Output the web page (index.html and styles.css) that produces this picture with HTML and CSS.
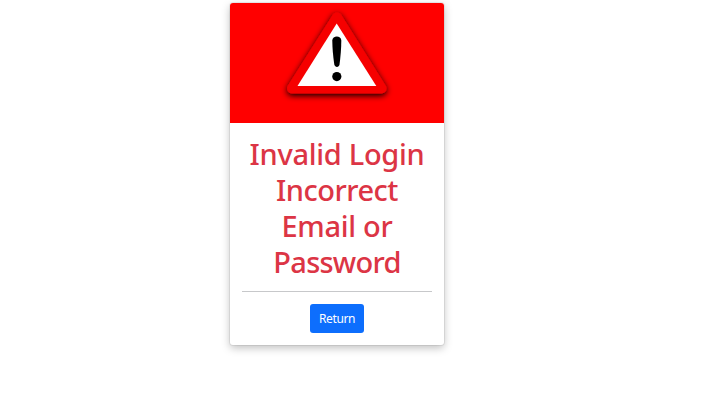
FILE: index.html
```html
<!DOCTYPE html>
<html lang="en">
<head>
<meta charset="utf-8">
<title>Invalid Login</title>
<link rel="stylesheet" href="styles.css">
</head>
<body>
<main class="card">
  <svg class="banner" viewBox="0 0 214 120" aria-hidden="true">
    <defs>
      <filter id="shadow" x="-20%" y="-20%" width="140%" height="150%">
        <feDropShadow dx="0" dy="2" stdDeviation="3.2" flood-color="#000" flood-opacity="1"/>
      </filter>
    </defs>
    <path d="M107 14.500 L62 85.500 H151.500 Z" fill="#f60206" stroke="#f60206" stroke-width="10" stroke-linejoin="round" filter="url(#shadow)"/>
    <path d="M106.700 20.500 L67.500 83 H146.300 Z" fill="#fff"/>
    <path d="M102.300 37.500 C102.300 32 111.300 32 111.300 37.500 C111.300 45 110.500 54 109.500 61.500 C109 64.800 105 64.800 104.300 61.500 C103.200 54 102.300 45 102.300 37.500 Z" fill="#000"/>
    <circle cx="106.800" cy="73.600" r="4.600" fill="#000"/>
  </svg>
  <div class="card-body">
    <h1 class="title"><span class="line-login">Invalid Login</span> <span class="line-incorrect">Incorrect</span> <span class="line-email">Email or</span> <span class="line-password">Password</span></h1>
    <hr class="divider">
    <button class="btn" type="button">Return</button>
  </div>
</main>
</body>
</html>
```

FILE: styles.css
```css
* { box-sizing: border-box; }
body {
  min-height: 100vh;
  margin: 0;
  padding: 3px 0 0 230px;
  background: #fff;
  font-family: "Noto Sans", "Open Sans", sans-serif;
}
.card {
  width: 214px;
  height: 342px;
  border-radius: 3px;
  background: #fff;
  box-shadow: 0 0 0 1px rgba(0, 0, 0, .06), 0 3px 8px rgba(0, 0, 0, .25);
  overflow: hidden;
}
.banner {
  display: block;
  width: 214px;
  height: 120px;
  background: #f00;
}
.card-body {
  padding: 13px 12px 12px;
  text-align: center;
}
.title {
  margin: 0;
  color: #dc3545;
  font-size: 29px;
  font-weight: 500;
  line-height: 36px;
}
.title span {
  display: block;
  white-space: nowrap;
}
.line-login { letter-spacing: -.3px; }
.line-incorrect { letter-spacing: -.5px; }
.line-email { letter-spacing: -.3px; }
.line-password { letter-spacing: -.75px; }
.divider {
  height: 1px;
  margin: 11px 0 12px;
  border: 0;
  background: #c7c8ca;
}
.btn {
  display: block;
  width: 54px;
  height: 29px;
  margin: 0 auto;
  padding: 0;
  border: 0;
  border-radius: 3px;
  background: #0d6efd;
  color: #fff;
  font-family: inherit;
  font-size: 12px;
  letter-spacing: -.4px;
  line-height: 29px;
}
```
